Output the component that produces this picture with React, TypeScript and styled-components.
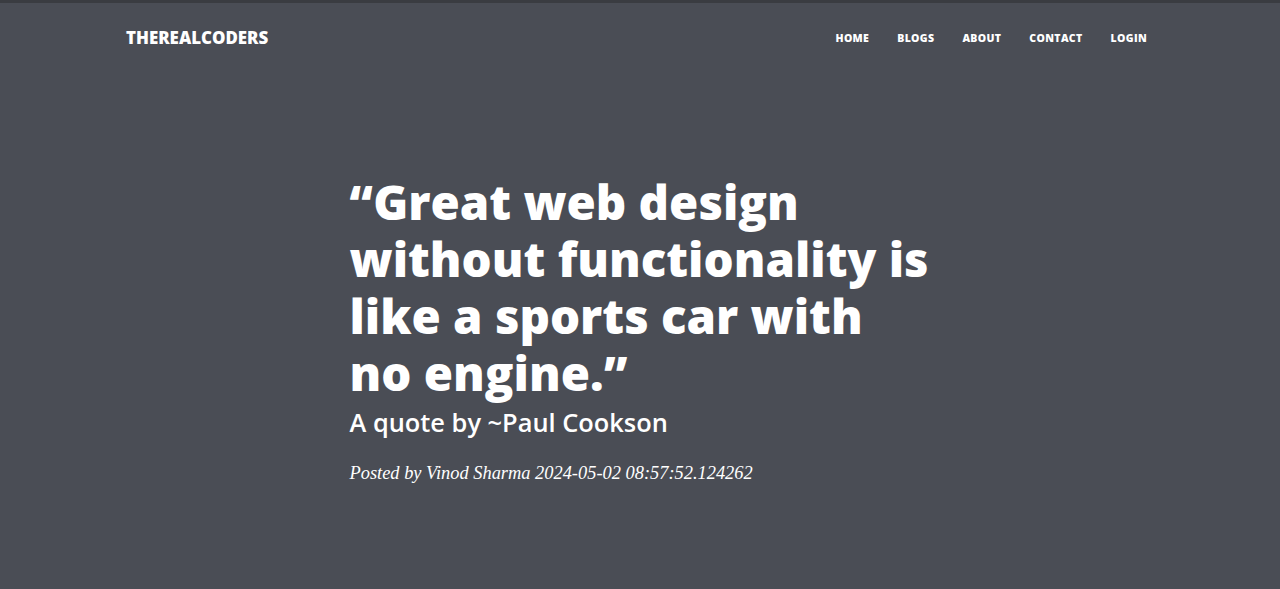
import React from "react";
import styled, { createGlobalStyle } from "styled-components";

const Global = createGlobalStyle`
  html, body { margin: 0; padding: 0; }
  body { background: #4a4d55; font-family: "Open Sans", "Liberation Sans", sans-serif; color: #fff; }
`;

const Page = styled.div`
  min-height: 589px;
  background: #4a4d55;
  border-top: 3px solid #3a3c41;
  box-sizing: border-box;
`;

const NavBar = styled.nav`
  display: flex;
  align-items: center;
  justify-content: space-between;
  padding: 0 119px 0 126px;
  height: 70px;
`;

const Brand = styled.a`
  font-weight: 800;
  font-size: 16.9px;
  text-transform: uppercase;
  color: #fff;
  text-decoration: none;
  margin-top: -1px;
`;

const NavList = styled.ul`
  display: flex;
  list-style: none;
  margin: 0;
  padding: 0;
  margin-top: -1px;
`;

const NavLink = styled.a`
  display: block;
  padding: 0 14px;
  font-size: 10.5px;
  font-weight: 800;
  letter-spacing: 0.35px;
  text-transform: uppercase;
  color: #fff;
  text-decoration: none;
`;

const Hero = styled.header`
  display: flex;
  justify-content: center;
  padding-top: 100px;
`;

const Column = styled.div`
  width: 585px;
  transform: translateX(2px);
`;

const Title = styled.h1`
  margin: 0;
  font-size: 47.4px;
  line-height: 57px;
  font-weight: 800;
  color: #fff;
`;

const Sub = styled.h2`
  margin: 4px 0 0;
  font-size: 25.4px;
  line-height: 34px;
  font-weight: 600;
  color: #fff;
`;

const Meta = styled.span`
  display: block;
  margin-top: 24px;
  font-family: "Liberation Serif", "DejaVu Serif", serif;
  font-style: italic;
  font-size: 18.4px;
  color: #fff;
`;

export default function App() {
  const links = ["Home", "Blogs", "About", "Contact", "Login"];
  return (
    <Page>
      <Global />
      <NavBar>
        <Brand href="#">TheRealCoders</Brand>
        <NavList>
          {links.map((l) => (
            <li key={l}>
              <NavLink href="#">{l}</NavLink>
            </li>
          ))}
        </NavList>
      </NavBar>
      <Hero>
        <Column>
          <Title>“Great web design without functionality is like a sports car with no engine.”</Title>
          <Sub>A quote by ~Paul Cookson</Sub>
          <Meta>Posted by Vinod Sharma 2024-05-02 08:57:52.124262</Meta>
        </Column>
      </Hero>
    </Page>
  );
}
